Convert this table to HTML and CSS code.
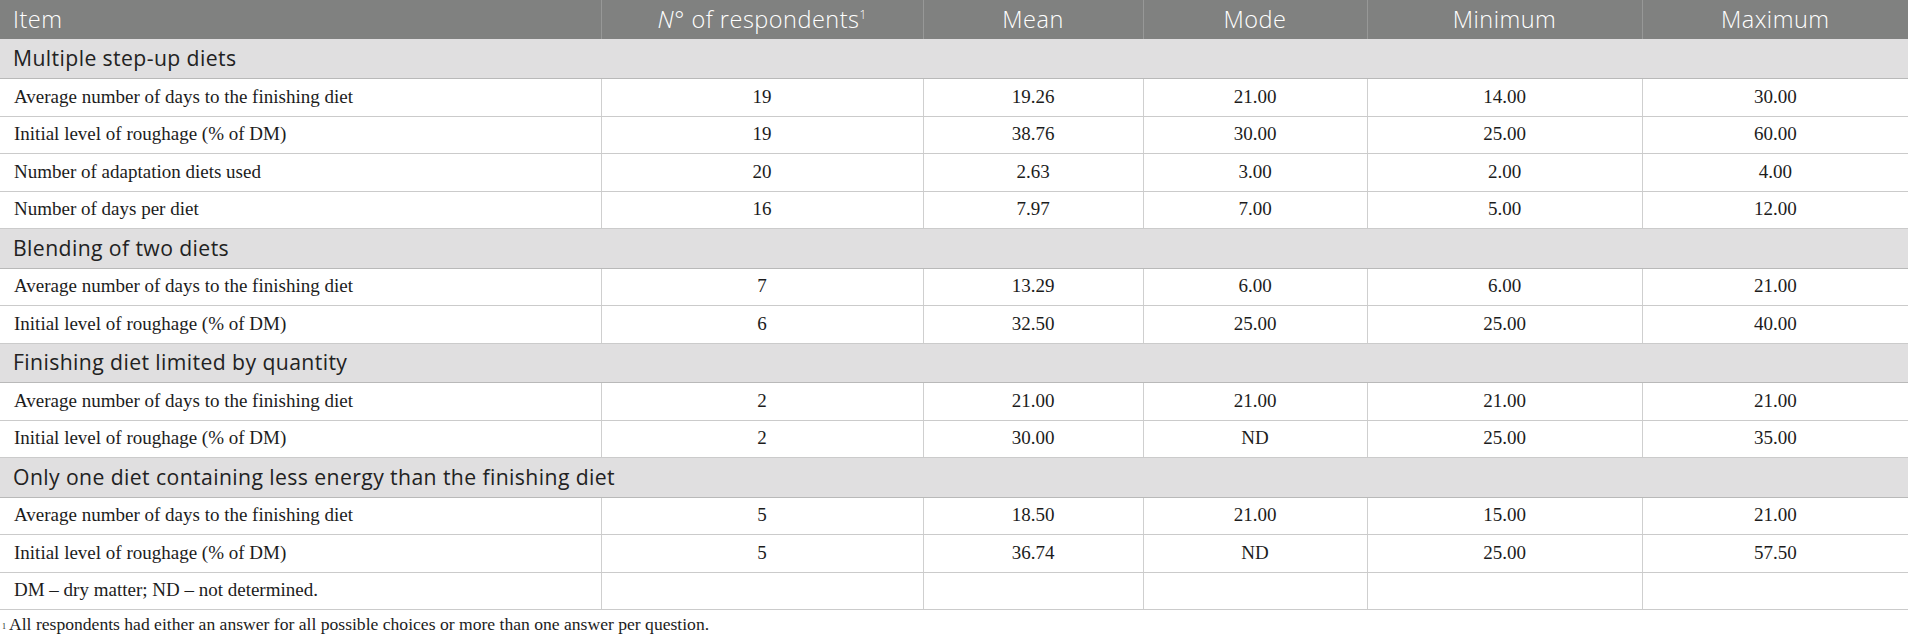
FILE: index.html
```html
<!DOCTYPE html>
<html lang="en">
<head>
<meta charset="utf-8">
<title>Adaptation diets</title>
<link rel="stylesheet" href="styles.css">
</head>
<body>
<table class="data">
  <colgroup>
    <col class="c-item"><col class="c-n"><col class="c-mean"><col class="c-mode"><col class="c-min"><col class="c-max">
  </colgroup>
  <thead>
    <tr class="head">
      <th class="left">Item</th>
      <th><i>N</i>° of respondents<sup>1</sup></th>
      <th>Mean</th>
      <th>Mode</th>
      <th>Minimum</th>
      <th>Maximum</th>
    </tr>
  </thead>
  <tbody>
    <tr class="sec"><td colspan="6">Multiple step-up diets</td></tr>
    <tr class="row"><td>Average number of days to the finishing diet</td><td>19</td><td>19.26</td><td>21.00</td><td>14.00</td><td>30.00</td></tr>
    <tr class="row"><td>Initial level of roughage (% of DM)</td><td>19</td><td>38.76</td><td>30.00</td><td>25.00</td><td>60.00</td></tr>
    <tr class="row"><td>Number of adaptation diets used</td><td>20</td><td>2.63</td><td>3.00</td><td>2.00</td><td>4.00</td></tr>
    <tr class="row"><td>Number of days per diet</td><td>16</td><td>7.97</td><td>7.00</td><td>5.00</td><td>12.00</td></tr>
    <tr class="sec"><td colspan="6">Blending of two diets</td></tr>
    <tr class="row"><td>Average number of days to the finishing diet</td><td>7</td><td>13.29</td><td>6.00</td><td>6.00</td><td>21.00</td></tr>
    <tr class="row"><td>Initial level of roughage (% of DM)</td><td>6</td><td>32.50</td><td>25.00</td><td>25.00</td><td>40.00</td></tr>
    <tr class="sec"><td colspan="6">Finishing diet limited by quantity</td></tr>
    <tr class="row"><td>Average number of days to the finishing diet</td><td>2</td><td>21.00</td><td>21.00</td><td>21.00</td><td>21.00</td></tr>
    <tr class="row"><td>Initial level of roughage (% of DM)</td><td>2</td><td>30.00</td><td>ND</td><td>25.00</td><td>35.00</td></tr>
    <tr class="sec"><td colspan="6">Only one diet containing less energy than the finishing diet</td></tr>
    <tr class="row"><td>Average number of days to the finishing diet</td><td>5</td><td>18.50</td><td>21.00</td><td>15.00</td><td>21.00</td></tr>
    <tr class="row"><td>Initial level of roughage (% of DM)</td><td>5</td><td>36.74</td><td>ND</td><td>25.00</td><td>57.50</td></tr>
    <tr class="row"><td>DM – dry matter; ND – not determined.</td><td></td><td></td><td></td><td></td><td></td></tr>
  </tbody>
</table>
<p class="foot"><sup>1</sup>All respondents had either an answer for all possible choices or more than one answer per question.</p>
</body>
</html>
```
FILE: styles.css
```css
html, body {
  margin: 0;
  padding: 0;
  background: #ffffff;
}
body {
  width: 1908px;
  font-family: "Liberation Serif", "Times New Roman", serif;
  color: #1c1c1c;
}
.data {
  width: 1908px;
  table-layout: fixed;
  border-collapse: collapse;
  border-spacing: 0;
}
.c-item { width: 601px; }
.c-n { width: 322px; }
.c-mean { width: 220px; }
.c-mode { width: 224px; }
.c-min { width: 275px; }
.c-max { width: 266px; }

.head th {
  height: 39px;
  padding: 0 0 2px 0;
  background: #808180;
  color: #ffffff;
  font-family: "Open Sans", "Noto Sans", sans-serif;
  font-weight: 300;
  font-size: 23.5px;
  letter-spacing: 0.5px;
  text-align: center;
  border-left: 1px solid #979897;
  box-sizing: border-box;
}
.head th:first-child { border-left: none; }
.head th.left {
  text-align: left;
  padding-left: 13px;
}
.head sup {
  font-size: 12px;
  vertical-align: top;
  position: relative;
  top: 3px;
  letter-spacing: 0;
}

.sec td {
  height: 39.5px;
  padding: 0 0 2px 13px;
  background: #e0dfe0;
  font-family: "Open Sans", "Noto Sans", sans-serif;
  font-size: 21.2px;
  letter-spacing: 0.4px;
  color: #222222;
  border-bottom: 1px solid #b9b9b9;
  box-sizing: border-box;
}

.row td {
  height: 37.5px;
  padding: 0 0 1px 0;
  font-size: 19px;
  text-align: center;
  border-bottom: 1px solid #cbcbcb;
  border-left: 1px solid #cfcfcf;
  box-sizing: border-box;
}
.row td:first-child {
  text-align: left;
  padding-left: 14px;
  border-left: none;
}

.foot {
  margin: 0;
  padding: 2px 0 0 2px;
  font-size: 17.6px;
  line-height: 24px;
  color: #1c1c1c;
}
.foot sup {
  font-size: 8px;
  vertical-align: top;
  position: relative;
  top: 3px;
  margin-right: 3px;
}
```
